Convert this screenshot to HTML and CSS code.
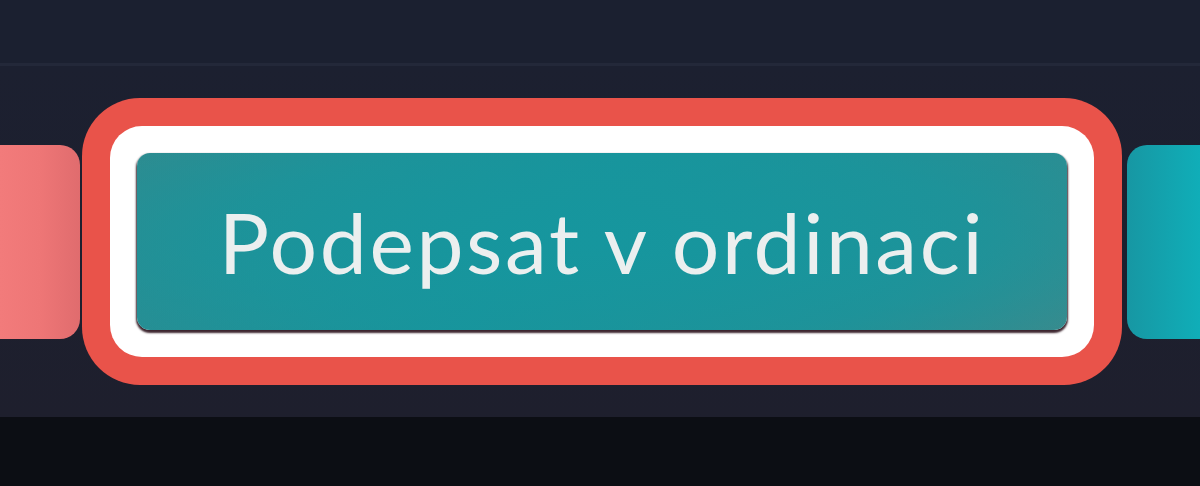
FILE: index.html
```html
<!DOCTYPE html>
<html lang="cs">
<head>
<meta charset="utf-8">
<title>Podepsat v ordinaci</title>
<link rel="stylesheet" href="styles.css">
</head>
<body>
<div class="topbar"></div>
<div class="divider"></div>
<section class="toolbar">
  <button class="btn btn-pink" type="button" aria-label="Odmítnout"></button>
  <div class="focus-outline">
    <div class="focus-ring">
      <button class="btn btn-main" type="button">Podepsat v ordinaci</button>
    </div>
  </div>
  <button class="btn btn-cyan" type="button" aria-label="Odeslat"></button>
</section>
<div class="footer"></div>
</body>
</html>
```
FILE: styles.css
```css
html, body {
  margin: 0;
  padding: 0;
  width: 1200px;
  height: 486px;
  overflow: hidden;
  background: #0c0e14;
  font-family: "Lato", "Open Sans", sans-serif;
}

.topbar {
  height: 63px;
  background: #1b2030;
}

.divider {
  height: 3px;
  background: #232839;
}

.toolbar {
  height: 351px;
  display: flex;
  align-items: center;
  gap: 0;
  overflow: hidden;
  background: linear-gradient(180deg, #1c2030 0%, #1e1f2d 100%);
}

.btn {
  border: none;
  margin: 0;
  padding: 0;
  font-family: inherit;
  cursor: pointer;
}

.btn-pink {
  flex: 0 0 80px;
  height: 194px;
  margin-right: 2px;
  border-radius: 0 20px 20px 0;
  background: linear-gradient(90deg, #f27b7b 0%, #ee7676 50%, #e06c6e 100%);
}

.focus-outline {
  flex: 0 0 auto;
  padding: 28px;
  border-radius: 58px;
  background: #e9534a;
}

.focus-ring {
  padding: 27px;
  border-radius: 32px;
  background: #ffffff;
}

.btn-main {
  display: flex;
  align-items: center;
  justify-content: center;
  width: 930px;
  height: 177px;
  border-radius: 13px;
  background:
    radial-gradient(ellipse 70% 90% at 50% 50%, rgba(22, 150, 158, 1) 0%, rgba(22, 150, 158, 0.6) 60%, rgba(22, 150, 158, 0) 100%),
    linear-gradient(135deg, #318a8e 0%, #1a939a 45%, #2a8d92 80%, #3d898b 100%);
  box-shadow: 0 2px 2px 1px rgba(40, 14, 24, 0.9);
  color: #ebefef;
  font-size: 84px;
  font-weight: 400;
  letter-spacing: 2.6px;
  line-height: 1;
}

.btn-cyan {
  flex: 0 0 200px;
  height: 194px;
  margin-left: 5px;
  border-radius: 20px 0 0 20px;
  background: linear-gradient(90deg, #1797a3 0%, #0fb0ba 40%, #0cb4bd 100%);
}

.footer {
  height: 69px;
  background: #0c0e14;
}
```
